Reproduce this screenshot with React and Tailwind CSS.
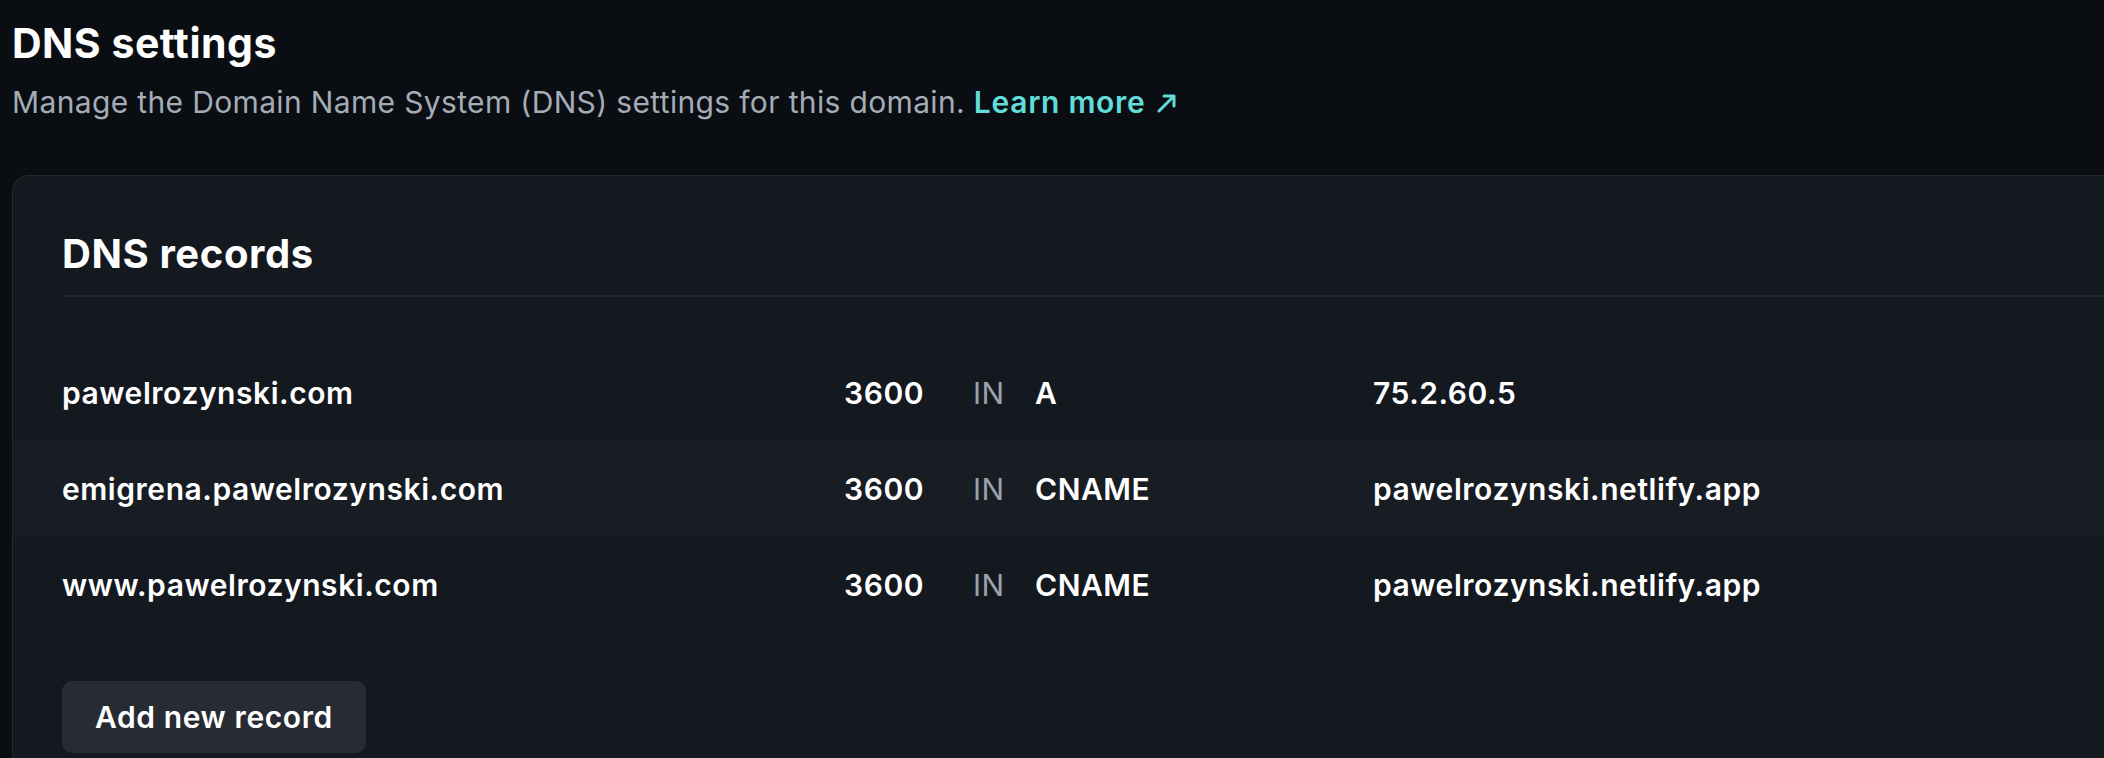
import React from "react";

const records = [
  { name: "pawelrozynski.com", ttl: "3600", type: "A", value: "75.2.60.5" },
  { name: "emigrena.pawelrozynski.com", ttl: "3600", type: "CNAME", value: "pawelrozynski.netlify.app" },
  { name: "www.pawelrozynski.com", ttl: "3600", type: "CNAME", value: "pawelrozynski.netlify.app" },
];

function ArrowOut() {
  return (
    <svg width="22" height="20" viewBox="0 0 22 20" fill="none" className="inline-block ml-[11px] -mt-[4px]">
      <path d="M3 18 L18 3 M8 3 H18 V13" stroke="currentColor" strokeWidth="3" strokeLinecap="round" strokeLinejoin="round" />
    </svg>
  );
}

export default function App() {
  return (
    <div
      className="w-full min-h-screen bg-[#0a0d12] overflow-hidden text-white"
      style={{ fontFamily: "Inter, 'Noto Sans', sans-serif" }}
    >
      <div className="pl-[12px] pt-[19px]">
        <h1 className="text-[41px] leading-[48px] font-bold tracking-[0.5px]">DNS settings</h1>
        <p className="mt-[15px] text-[30px] leading-[40px] tracking-[0.35px] text-[#a4acb6]">
          Manage the Domain Name System (DNS) settings for this domain.{" "}
          <a href="#" className="font-semibold tracking-[0.7px] text-[#60dcd9]">
            Learn more
            <ArrowOut />
          </a>
        </p>
      </div>

      <div className="mt-[53px] ml-[12px] -mr-[40px] border border-[#23272e] rounded-tl-[16px] rounded-tr-[16px] bg-[#14181f]">
        <div className="pl-[49px] pt-[54px]">
          <h2 className="text-[40px] leading-[48px] font-bold tracking-[0.6px] pb-[17px] border-b-2 border-[#24282f]">
            DNS records
          </h2>
        </div>

        <div className="mt-[48px]">
          {records.map((r, i) => (
            <div
              key={r.name}
              className={`grid grid-cols-[782px_129px_62px_338px_1fr] items-center h-[96px] pl-[49px] text-[30px] font-semibold tracking-[0.55px] ${
                i === 1 ? "bg-[#181c23]" : ""
              }`}
            >
              <div>{r.name}</div>
              <div>{r.ttl}</div>
              <div className="font-normal text-[#9aa2ad]">IN</div>
              <div>{r.type}</div>
              <div>{r.value}</div>
            </div>
          ))}
        </div>

        <div className="pl-[49px] pt-[48px] pb-[40px]">
          <button className="h-[72px] px-[33px] rounded-[10px] bg-[#272c34] text-[30px] font-semibold tracking-[0.6px]">
            Add new record
          </button>
        </div>
      </div>
    </div>
  );
}
